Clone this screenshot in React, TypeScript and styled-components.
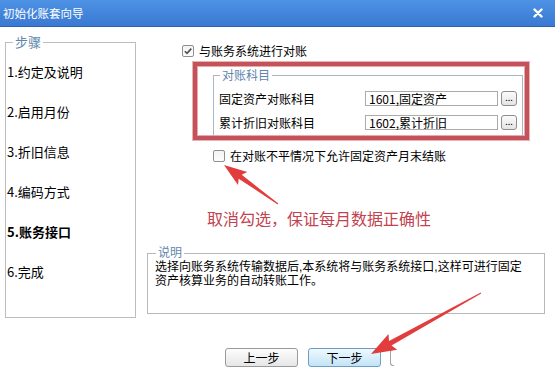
import React from 'react'
import styled, { createGlobalStyle } from 'styled-components'

const GlobalStyle = createGlobalStyle`
  html, body {
    margin: 0;
    padding: 0;
    background: #fff;
  }
  body {
    font-family: "Noto Sans CJK SC", "Liberation Sans", sans-serif;
    font-size: 12px;
    color: #000;
  }
`

const Frame = styled.div`
  position: relative;
  width: 555px;
  height: 374px;
  overflow: hidden;
  background: #fff;
`

const TitleBar = styled.div`
  height: 27px;
  box-sizing: border-box;
  display: flex;
  align-items: center;
  justify-content: space-between;
  padding: 0 12px 0 3px;
  background: linear-gradient(#4d92e5, #3a79d2);
  border-bottom: 1px solid #2e63ae;
  color: #fff;
  font-size: 11.5px;
  line-height: 14px;
`

const CloseIcon = styled.svg`
  width: 10px;
  height: 10px;
`

const Body = styled.div`
  display: flex;
  align-items: flex-start;
  gap: 11px;
  padding-left: 5px;
`

const Group = styled.fieldset<{ $line: string }>`
  margin: 0;
  padding: 0;
  min-width: 0;
  box-sizing: border-box;
  border: 1px solid ${(p) => p.$line};
`

const Legend = styled.legend<{ $offset: number; $size?: number; $lh?: number }>`
  margin-left: ${(p) => p.$offset}px;
  padding: 0 2px;
  color: #5f87ad;
  font-size: ${(p) => p.$size ?? 12}px;
  line-height: ${(p) => p.$lh ?? 16}px;
`

const StepsBox = styled(Group)`
  margin-top: 7px;
  width: 131px;
  height: 284px;
`

const StepList = styled.div`
  display: flex;
  flex-direction: column;
  gap: 24px;
  padding: 14px 0 0 1px;
`

const Step = styled.div<{ $active?: boolean }>`
  font-size: 13px;
  line-height: 16px;
  font-weight: ${(p) => (p.$active ? 700 : 400)};
`

const Main = styled.div`
  width: 398px;
  display: flex;
  flex-direction: column;
`

const CheckRow = styled.label<{ $left: number; $top: number }>`
  display: flex;
  align-items: center;
  gap: 5px;
  height: 16px;
  margin: ${(p) => p.$top}px 0 0 ${(p) => p.$left}px;
  line-height: 16px;
`

const Box = styled.span`
  width: 12px;
  height: 12px;
  box-sizing: border-box;
  border: 1px solid #8e8f8f;
  border-radius: 2px;
  background: linear-gradient(#f4f4f4, #fdfdfd);
  display: flex;
  align-items: center;
  justify-content: center;
`

const Highlight = styled.div`
  margin: 3px 0 0 46px;
  width: 336px;
  height: 78px;
  box-sizing: border-box;
  border: 4px solid #c4525a;
  box-shadow: inset 0 0 0 1px #eaa8ab, 0 0 0 1px #e9b3b6;
  overflow: hidden;
`

const SubjectBox = styled(Group)`
  margin: 1px 2px 0 16px;
  height: 90px;
`

const SubjectRows = styled.div`
  display: flex;
  flex-direction: column;
  gap: 9px;
  padding: 8px 0 0 5px;
`

const SubjectRow = styled.div`
  display: flex;
  align-items: center;
  height: 15px;
`

const SubjectLabel = styled.span`
  width: 146px;
  line-height: 15px;
`

const Field = styled.div`
  width: 133px;
  height: 15px;
  box-sizing: border-box;
  border: 1px solid #ababab;
  background: #fff;
  padding-left: 3px;
  line-height: 13px;
`

const DotsButton = styled.div`
  margin-left: 3px;
  width: 16px;
  height: 15px;
  box-sizing: border-box;
  border: 1px solid #8d8d8d;
  border-radius: 3px;
  background: linear-gradient(#fbfbfb, #e4e4e4);
  font-size: 9px;
  line-height: 11px;
  text-align: center;
`

const Note = styled.div`
  margin: 44px 0 0 60px;
  color: #c2424f;
  font-size: 16px;
  line-height: 20px;
`

const ExplainBox = styled(Group)`
  margin-top: 18px;
  height: 68px;
  font-family: "Liberation Sans", "Noto Sans CJK SC", sans-serif;
`

const ExplainText = styled.p`
  margin: 1px 0 0 7px;
  line-height: 13.5px;
`

const Footer = styled.div`
  display: flex;
  align-items: center;
  gap: 10px;
  margin-top: 30px;
  padding-left: 225px;
`

const Button = styled.div<{ $primary?: boolean }>`
  width: 73px;
  height: 19px;
  box-sizing: border-box;
  border: 1px solid ${(p) => (p.$primary ? '#6f9cc2' : '#9a9a9a')};
  border-radius: 3px;
  background: ${(p) =>
    p.$primary ? 'linear-gradient(#eef8fe, #c3e4f8)' : 'linear-gradient(#fdfdfd, #e6e6e6)'};
  text-align: center;
  line-height: 17px;
`

const ButtonStub = styled.div`
  margin-left: -1px;
  width: 4px;
  height: 17px;
  box-sizing: border-box;
  border: 1px solid #a4a4a4;
  border-right: none;
  border-radius: 3px 0 0 3px;
`

const Overlay = styled.svg`
  position: absolute;
  left: 0;
  top: 0;
  pointer-events: none;
`

type Pt = [number, number]

const arrowPoints = (from: Pt, to: Pt, head: number, headW: number, w0: number, w1: number) => {
  const [x1, y1] = from
  const [x2, y2] = to
  const len = Math.hypot(x2 - x1, y2 - y1)
  const ux = (x2 - x1) / len
  const uy = (y2 - y1) / len
  const px = -uy
  const py = ux
  const bx = x2 - ux * head
  const by = y2 - uy * head
  const pts: Pt[] = [
    [x1 + (px * w0) / 2, y1 + (py * w0) / 2],
    [bx + (px * w1) / 2, by + (py * w1) / 2],
    [bx - ux * 3 + (px * headW) / 2, by - uy * 3 + (py * headW) / 2],
    [x2, y2],
    [bx - ux * 3 - (px * headW) / 2, by - uy * 3 - (py * headW) / 2],
    [bx - (px * w1) / 2, by - (py * w1) / 2],
    [x1 - (px * w0) / 2, y1 - (py * w0) / 2],
  ]
  return pts.map((p) => p.map((v) => v.toFixed(1)).join(',')).join(' ')
}

const Check = ({ checked }: { checked?: boolean }) => (
  <Box>
    {checked && (
      <svg width="10" height="10" viewBox="0 0 10 10">
        <path d="M1.8 5.2 L4 7.4 L8.3 2.6" fill="none" stroke="#4f4f4f" strokeWidth="1.6" />
      </svg>
    )}
  </Box>
)

const steps = ['1.约定及说明', '2.启用月份', '3.折旧信息', '4.编码方式', '5.账务接口', '6.完成']

const subjects = [
  { label: '固定资产对账科目', value: '1601,固定资产' },
  { label: '累计折旧对账科目', value: '1602,累计折旧' },
]

const App: React.FC = () => {
  const current = 4

  return (
    <Frame>
      <GlobalStyle />
      <TitleBar>
        <span>初始化账套向导</span>
        <CloseIcon viewBox="0 0 10 10">
          <path d="M1.5 1.5 L8.5 8.5 M8.5 1.5 L1.5 8.5" stroke="#fff" strokeWidth="2.4" strokeLinecap="round" />
        </CloseIcon>
      </TitleBar>

      <Body>
        <StepsBox $line="#bdbdbd">
          <Legend $offset={7} $size={13}>步骤</Legend>
          <StepList>
            {steps.map((s, i) => (
              <Step key={s} $active={i === current}>
                {s}
              </Step>
            ))}
          </StepList>
        </StepsBox>

        <Main>
          <CheckRow $left={35} $top={16}>
            <Check checked />
            与账务系统进行对账
          </CheckRow>

          <Highlight>
            <SubjectBox $line="#aab6c2">
              <Legend $offset={6}>对账科目</Legend>
              <SubjectRows>
                {subjects.map((s) => (
                  <SubjectRow key={s.label}>
                    <SubjectLabel>{s.label}</SubjectLabel>
                    <Field>{s.value}</Field>
                    <DotsButton>...</DotsButton>
                  </SubjectRow>
                ))}
              </SubjectRows>
            </SubjectBox>
          </Highlight>

          <CheckRow $left={66} $top={8}>
            <Check />
            在对账不平情况下允许固定资产月末结账
          </CheckRow>

          <Note>取消勾选，保证每月数据正确性</Note>

          <ExplainBox $line="#b8b8b8">
            <Legend $offset={8} $lh={14}>说明</Legend>
            <ExplainText>
              选择向账务系统传输数据后,本系统将与账务系统接口,这样可进行固定
              <br />
              资产核算业务的自动转账工作。
            </ExplainText>
          </ExplainBox>
        </Main>
      </Body>

      <Footer>
        <Button>上一步</Button>
        <Button $primary>下一步</Button>
        <ButtonStub />
      </Footer>

      <Overlay width="555" height="374" viewBox="0 0 555 374">
        <polygon points={arrowPoints([278, 204], [224, 165], 20, 16, 1, 5)} fill="#e23c3d" />
        <polygon points={arrowPoints([481, 293], [371, 354], 22, 18, 1, 5)} fill="#e23c3d" />
      </Overlay>
    </Frame>
  )
}

export default App
